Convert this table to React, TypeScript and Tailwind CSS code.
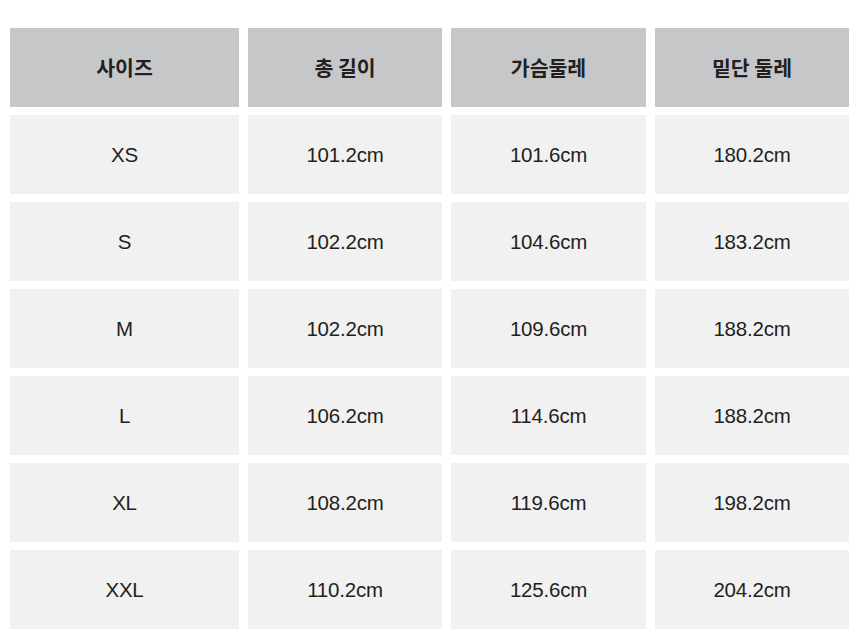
import React from "react";

const headers = ["사이즈", "총 길이", "가슴둘레", "밑단 둘레"];

const rows = [
  ["XS", "101.2cm", "101.6cm", "180.2cm"],
  ["S", "102.2cm", "104.6cm", "183.2cm"],
  ["M", "102.2cm", "109.6cm", "188.2cm"],
  ["L", "106.2cm", "114.6cm", "188.2cm"],
  ["XL", "108.2cm", "119.6cm", "198.2cm"],
  ["XXL", "110.2cm", "125.6cm", "204.2cm"],
];

export default function App() {
  return (
    <div className="w-[860px] h-[637px] bg-white pt-[28px] pl-[10px]">
      <div className="grid grid-cols-[229px_194px_195px_194px] gap-x-[9px] gap-y-[8px] text-[#231f20]">
        {/* Header row */}
        {headers.map((h) => (
          <div
            key={h}
            className="h-[79px] bg-[#c6c7c9] flex items-center justify-center text-[20.5px] font-bold"
            style={{ fontFamily: '"Noto Sans CJK KR", "Noto Sans", sans-serif' }}
          >
            {h}
          </div>
        ))}

        {/* Size rows */}
        {rows.map((row) =>
          row.map((cell, i) => (
            <div
              key={row[0] + i}
              className="h-[79px] bg-[#f1f1f1] flex items-center justify-center pt-[2px] text-[20.5px] tracking-[-0.01em] font-['Liberation_Sans',Arial,sans-serif]"
            >
              {cell}
            </div>
          ))
        )}
      </div>
    </div>
  );
}
